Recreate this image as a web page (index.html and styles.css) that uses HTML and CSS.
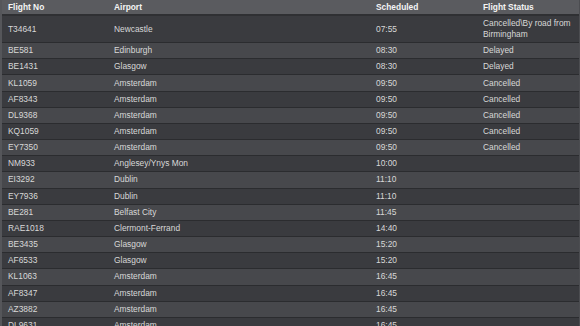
FILE: index.html
```html
<!DOCTYPE html>
<html>
<head>
<meta charset="utf-8">
<link rel="stylesheet" href="styles.css">
</head>
<body>
<div class="board">
<table class="flights">
<colgroup><col class="c1"><col class="c2"><col class="c3"><col class="c4"></colgroup>
<thead>
<tr><th>Flight No</th><th>Airport</th><th>Scheduled</th><th>Flight Status</th></tr>
</thead>
<tbody>
<tr><td>T34641</td><td>Newcastle</td><td>07:55</td><td>Cancelled\By road from Birmingham</td></tr>
<tr><td>BE581</td><td>Edinburgh</td><td>08:30</td><td>Delayed</td></tr>
<tr><td>BE1431</td><td>Glasgow</td><td>08:30</td><td>Delayed</td></tr>
<tr><td>KL1059</td><td>Amsterdam</td><td>09:50</td><td>Cancelled</td></tr>
<tr><td>AF8343</td><td>Amsterdam</td><td>09:50</td><td>Cancelled</td></tr>
<tr><td>DL9368</td><td>Amsterdam</td><td>09:50</td><td>Cancelled</td></tr>
<tr><td>KQ1059</td><td>Amsterdam</td><td>09:50</td><td>Cancelled</td></tr>
<tr><td>EY7350</td><td>Amsterdam</td><td>09:50</td><td>Cancelled</td></tr>
<tr><td>NM933</td><td>Anglesey/Ynys Mon</td><td>10:00</td><td></td></tr>
<tr><td>EI3292</td><td>Dublin</td><td>11:10</td><td></td></tr>
<tr><td>EY7936</td><td>Dublin</td><td>11:10</td><td></td></tr>
<tr><td>BE281</td><td>Belfast City</td><td>11:45</td><td></td></tr>
<tr><td>RAE1018</td><td>Clermont-Ferrand</td><td>14:40</td><td></td></tr>
<tr><td>BE3435</td><td>Glasgow</td><td>15:20</td><td></td></tr>
<tr><td>AF6533</td><td>Glasgow</td><td>15:20</td><td></td></tr>
<tr><td>KL1063</td><td>Amsterdam</td><td>16:45</td><td></td></tr>
<tr><td>AF8347</td><td>Amsterdam</td><td>16:45</td><td></td></tr>
<tr><td>AZ3882</td><td>Amsterdam</td><td>16:45</td><td></td></tr>
<tr><td>DL9631</td><td>Amsterdam</td><td>16:45</td><td></td></tr>
</tbody>
</table>
</div>
</body>
</html>
```

FILE: styles.css
```css
html, body {
  margin: 0;
  padding: 0;
  background: #3a3b3f;
}
body {
  width: 580px;
  height: 326px;
  overflow: hidden;
  font-family: "Liberation Sans", Arial, sans-serif;
}
.board {
  border-left: 2px solid #55565a;
  border-right: 1px solid #4c4d51;
}
.flights {
  width: 100%;
  border-collapse: collapse;
  table-layout: fixed;
  font-size: 8.4px;
}
.c1 { width: 106px; }
.c2 { width: 262px; }
.c3 { width: 107px; }
.c4 { width: auto; }
.flights th {
  text-align: left;
  font-weight: bold;
  color: #f4f4f4;
  background: #5a5b5f;
  line-height: 11px;
  padding: 1.5px 6px;
  border-bottom: 2px solid #2f3033;
}
.flights td {
  color: #d8d8d8;
  line-height: 11px;
  padding: 2.09px 6px;
  border-bottom: 1px solid #2b2c2f;
  vertical-align: middle;
}
.flights tbody tr:nth-child(odd) td {
  background: #3a3b3f;
}
.flights tbody tr:nth-child(even) td {
  background: #47484c;
}
```
